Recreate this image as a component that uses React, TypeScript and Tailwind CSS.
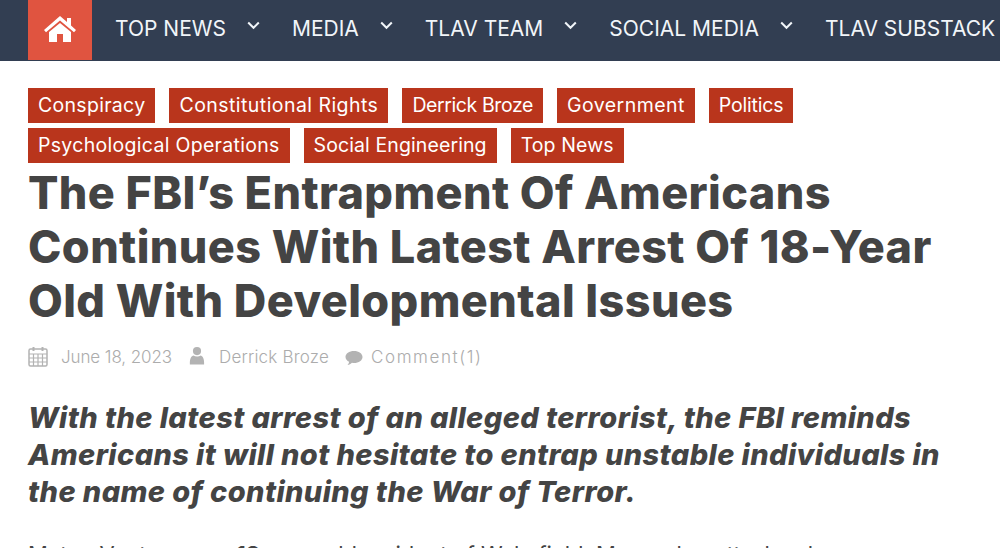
import React from "react";

function Chevron() {
  return (
    <svg width="13" height="9" viewBox="0 0 13 9" fill="none" stroke="#f1f5f9" strokeWidth="2" className="mb-[8px] ml-[21px]">
      <path d="M1.2 1.5 L6.5 6.8 L11.8 1.5" />
    </svg>
  );
}

function NavItem({ label, chevron = true }: { label: string; chevron?: boolean }) {
  return (
    <div className="flex items-center shrink-0 mr-[32px] h-[58px]">
      <span className="text-[21px] leading-[58px] text-[#f1f5f9] whitespace-nowrap">{label}</span>
      {chevron && <Chevron />}
    </div>
  );
}

function Tag({ label, className = "tracking-[0.2px]" }: { label: string; className?: string }) {
  return (
    <span className={"bg-[#b9351c] text-white text-[19.5px] leading-[34px] h-[34.5px] px-[10px] whitespace-nowrap " + className}>{label}</span>
  );
}

export default function App() {
  return (
    <div className="w-[1000px] h-[548px] overflow-hidden bg-white font-['Inter',sans-serif]">
      <nav className="h-[61px] bg-[#323e52] flex pl-[28px] overflow-hidden">
        <div className="w-[64px] h-[60px] bg-[#e05440] flex items-center justify-center shrink-0 mr-[23px]">
          <svg width="32" height="26" viewBox="0 0 32 26" fill="#fff" className="mb-[2px]">
            <path d="M16 0 L23 6 V2 H27 V9.5 L32 14 L30 16.3 L16 4.5 L2 16.3 L0 14 Z" />
            <path d="M16 7 L27 16 V26 H19 V18 H13 V26 H5 V16 Z" />
          </svg>
        </div>
        <NavItem label="TOP NEWS" />
        <NavItem label="MEDIA" />
        <NavItem label="TLAV TEAM" />
        <NavItem label="SOCIAL MEDIA" />
        <NavItem label="TLAV SUBSTACK" chevron={false} />
      </nav>
      <main className="px-[28px] pt-[27px]">
        <div className="flex flex-wrap gap-x-[14px] gap-y-[5.5px] w-[800px]">
          <Tag label="Conspiracy" className="tracking-[0.3px]" />
          <Tag label="Constitutional Rights" className="tracking-[0.45px]" />
          <Tag label="Derrick Broze" className="tracking-[-0.4px]" />
          <Tag label="Government" className="tracking-[0.45px]" />
          <Tag label="Politics" className="tracking-[-0.2px]" />
          <Tag label="Psychological Operations" className="tracking-[0.3px]" />
          <Tag label="Social Engineering" className="tracking-[0.1px]" />
          <Tag label="Top News" className="tracking-[0.1px]" />
        </div>
        <h1 className="mt-[3px] text-[45px] leading-[54px] font-extrabold text-[#444444] tracking-[0.4px] whitespace-nowrap">
          The FBI’s Entrapment Of Americans<br />Continues With Latest Arrest Of 18-Year<br />Old With Developmental Issues
        </h1>
        <div className="mt-[16px] flex items-center h-[28px] text-[#acacac] text-[17px] font-light">
          <svg width="20" height="21" viewBox="0 0 20 21" fill="none" stroke="#b3b3b3" strokeWidth="1.5" className="mb-[2px]">
            <rect x="1" y="3" width="18" height="17" rx="1.5" />
            <path d="M1 8 H19 M1 12 H19 M1 16 H19 M5.5 8 V20 M10 8 V20 M14.5 8 V20" strokeWidth="1.2" />
            <path d="M5.5 1 V5 M14.5 1 V5" strokeWidth="2" />
          </svg>
          <span className="ml-[13px] tracking-[-0.1px] w-[111px] whitespace-nowrap">June 18, 2023</span>
          <svg width="16" height="19" viewBox="0 0 18 20" fill="#b3b3b3" className="ml-[17px] mb-[5px]">
            <circle cx="9" cy="5" r="4.6" />
            <path d="M1 20 C0.5 13 3 10.5 5 10 C7 11.5 11 11.5 13 10 C15 10.5 17.5 13 17 20 Z" />
          </svg>
          <span className="ml-[14px] tracking-[0.2px] w-[110px] whitespace-nowrap">Derrick Broze</span>
          <svg width="18" height="16" viewBox="0 0 18 16" fill="#b3b3b3" className="ml-[16px]">
            <path d="M9 1 C13.8 1 17.5 3.6 17.5 7 C17.5 10.4 13.8 13 9 13 C8.3 13 7.6 13 7 12.8 C5.8 14 4.2 14.8 2.5 15 C3.4 14 4 13 4.1 11.8 C2 10.8 0.5 9 0.5 7 C0.5 3.6 4.2 1 9 1 Z" />
          </svg>
          <span className="ml-[8px] tracking-[1.6px] whitespace-nowrap">Comment(1)</span>
        </div>
        <p className="mt-[27px] text-[29px] leading-[37px] font-extrabold italic text-[#444444] tracking-[0.4px] whitespace-nowrap">
          With the latest arrest of an alleged terrorist, the FBI reminds<br />Americans it will not hesitate to entrap unstable individuals in<br />the name of continuing the War of Terror.
        </p>
        <p className="mt-[29px] text-[22px] leading-[30px] text-[#444444] whitespace-nowrap">
          Mateo Ventura, an <b className="ml-[12px]">18</b>-year-old resident of Wakefield, Massachusetts, has been
        </p>
      </main>
    </div>
  );
}
